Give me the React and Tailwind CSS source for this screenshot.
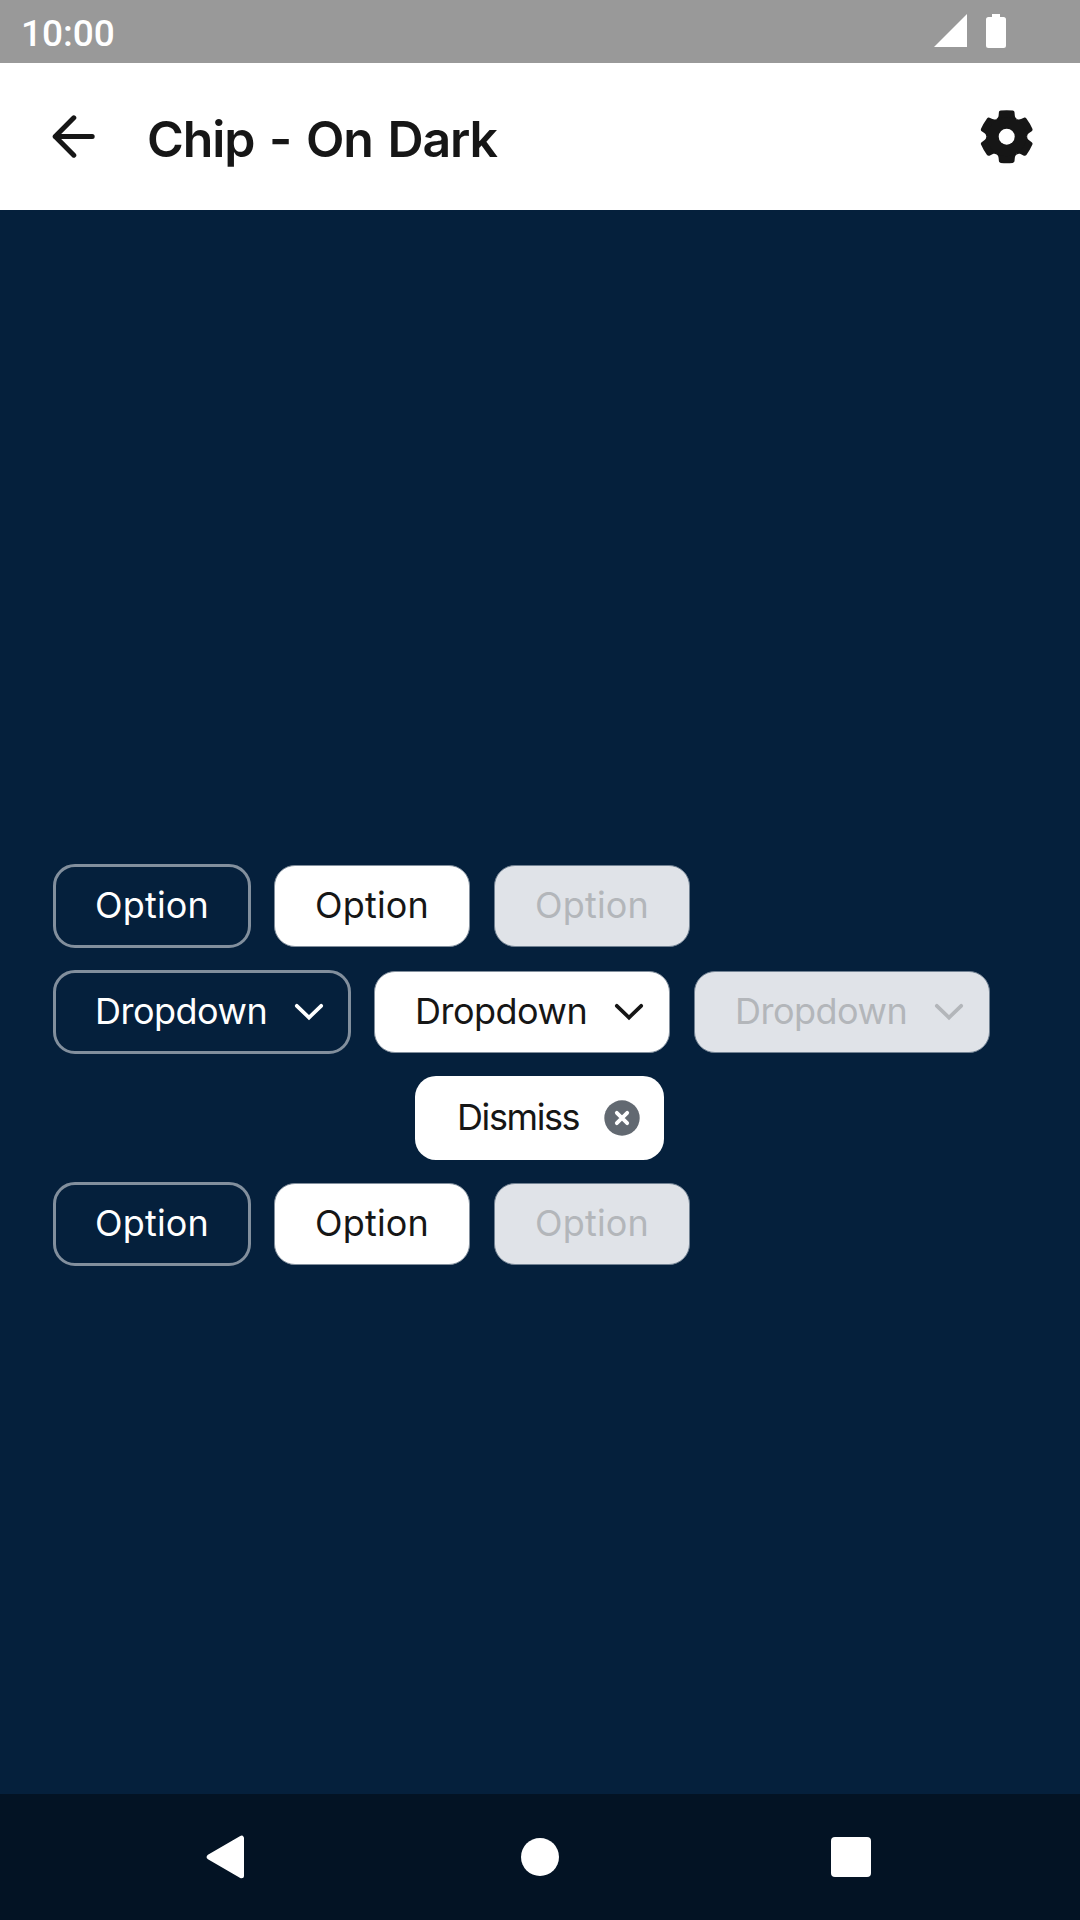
const TOOTH =
  'M0 0L-10.25 -17.75C-8.95 -18.5 -8.3 -19.5 -8.1 -21.2L-7.8 -24.4C-7.6 -25.6 -7 -26 -6 -26.2Q0 -26.9 6 -26.2C7 -26 7.6 -25.6 7.8 -24.4L8.1 -21.2C8.3 -19.5 8.95 -18.5 10.25 -17.75Z';

function GearIcon() {
  return (
    <svg width="54" height="54" viewBox="-26.7 -26.7 54 54" fill="#161616">
      {[0, 60, 120, 180, 240, 300].map((a) => (
        <path key={a} d={TOOTH} transform={`rotate(${a})`} />
      ))}
      <circle r="19.5" />
      <circle r="8" fill="#fff" />
    </svg>
  );
}

function BackIcon() {
  return (
    <svg width="44" height="44" viewBox="0 0 44 44" fill="none" stroke="#161616" strokeWidth="5" strokeLinecap="round" strokeLinejoin="round">
      <path d="M40.2 21.5H3.2M21.8 2.8L3.2 21.5L21.8 40.2" />
    </svg>
  );
}

function Chevron() {
  return (
    <svg className="shrink-0" width="30" height="18" viewBox="0 0 30 18" fill="none" stroke="currentColor" strokeWidth="3.7" strokeLinecap="round">
      <path d="M2.8 2.8L15 14.6L27.2 2.8" />
    </svg>
  );
}

function DismissIcon() {
  return (
    <svg className="shrink-0" width="36" height="36" viewBox="-18 -18 36 36">
      <circle r="17.7" fill="#626971" />
      <path d="M-5.2 -5.2L5.2 5.2M5.2 -5.2L-5.2 5.2" stroke="#fff" strokeWidth="3.8" strokeLinecap="round" />
    </svg>
  );
}

const STYLES = {
  default: 'h-[84px] rounded-[22px] border-[3px] border-[#828f9d] text-white',
  selected: 'm-px h-[82px] rounded-[21px] border border-[#828f9d] bg-white text-[#161616]',
  disabled: 'm-px h-[82px] rounded-[21px] border border-[#728293] bg-[#e0e3e8] text-[#b3b6ba]',
};

const OPTION_WIDTH = { default: 'w-[198px]', selected: 'w-[196px]', disabled: 'w-[196px]' };
const DROPDOWN_WIDTH = { default: 'w-[298px]', selected: 'w-[296px]', disabled: 'w-[296px]' };
const DROPDOWN_PAD = { default: 'pl-[39px] pr-[24px]', selected: 'pl-[40px] pr-[25px]', disabled: 'pl-[40px] pr-[25px]' };

const KINDS = ['default', 'selected', 'disabled'];

function OptionRow() {
  return (
    <div className="flex w-full gap-[22px] pl-[53px]">
      {KINDS.map((k) => (
        <button key={k} className={`flex items-center justify-center ${STYLES[k]} ${OPTION_WIDTH[k]}`}>
          <span className="pb-[2px] text-[36px] leading-none tracking-[0.2px]">Option</span>
        </button>
      ))}
    </div>
  );
}

function DropdownRow() {
  return (
    <div className="flex w-full gap-[22px] pl-[53px]">
      {KINDS.map((k) => (
        <button key={k} className={`flex items-center justify-between ${STYLES[k]} ${DROPDOWN_WIDTH[k]} ${DROPDOWN_PAD[k]}`}>
          <span className="pb-[2px] text-[36px] leading-none tracking-[-0.5px]">Dropdown</span>
          <Chevron />
        </button>
      ))}
    </div>
  );
}

export default function App() {
  return (
    <div className="flex h-[1920px] w-[1080px] flex-col overflow-hidden bg-[#05203c] font-['Inter',sans-serif]">
      <div className="flex h-[63px] shrink-0 items-center justify-between bg-[#999999] pl-[21px] pr-[73px] text-white">
        <span className="pt-[3px] font-['Roboto',sans-serif] text-[37px] font-medium leading-none">10:00</span>
        <svg className="mb-px" width="74" height="36" viewBox="0 0 74 36" fill="#fff">
          <path d="M1 34L34 1V34Z" />
          <path d="M59 1H67V4H70.5Q73 4 73 6.5V32.5Q73 35 70.5 35H55.5Q53 35 53 32.5V6.5Q53 4 55.5 4H59Z" />
        </svg>
      </div>
      <header className="flex h-[147px] shrink-0 items-center bg-white pl-[52px] pr-[46px]">
        <BackIcon />
        <h1 className="ml-[51px] flex-1 pt-[4px] text-[50px] font-semibold leading-none tracking-[-1.1px] text-[#161616] [word-spacing:3.2px]">Chip - On Dark</h1>
        <GearIcon />
      </header>
      <main className="flex flex-1 flex-col items-center justify-center gap-[22px] pt-[126px]">
        <OptionRow />
        <DropdownRow />
        <button className="mr-px flex h-[84px] w-[249px] items-center justify-between rounded-[21px] bg-white pl-[42px] pr-[24px] text-[#161616]">
          <span className="pb-[2px] text-[36px] leading-none tracking-[-1.4px]">Dismiss</span>
          <DismissIcon />
        </button>
        <OptionRow />
      </main>
      <nav className="flex h-[126px] shrink-0 items-center bg-[#031324] pl-[206px]">
        <svg width="38" height="44" viewBox="0 0 38 44" fill="#fff" stroke="#fff" strokeWidth="5" strokeLinejoin="round">
          <path d="M3.2 22L35.5 3.2V40.8Z" />
        </svg>
        <span className="ml-[277px] size-[38px] rounded-full bg-white" />
        <span className="ml-[272px] size-[40px] rounded-[4px] bg-white" />
      </nav>
    </div>
  );
}
